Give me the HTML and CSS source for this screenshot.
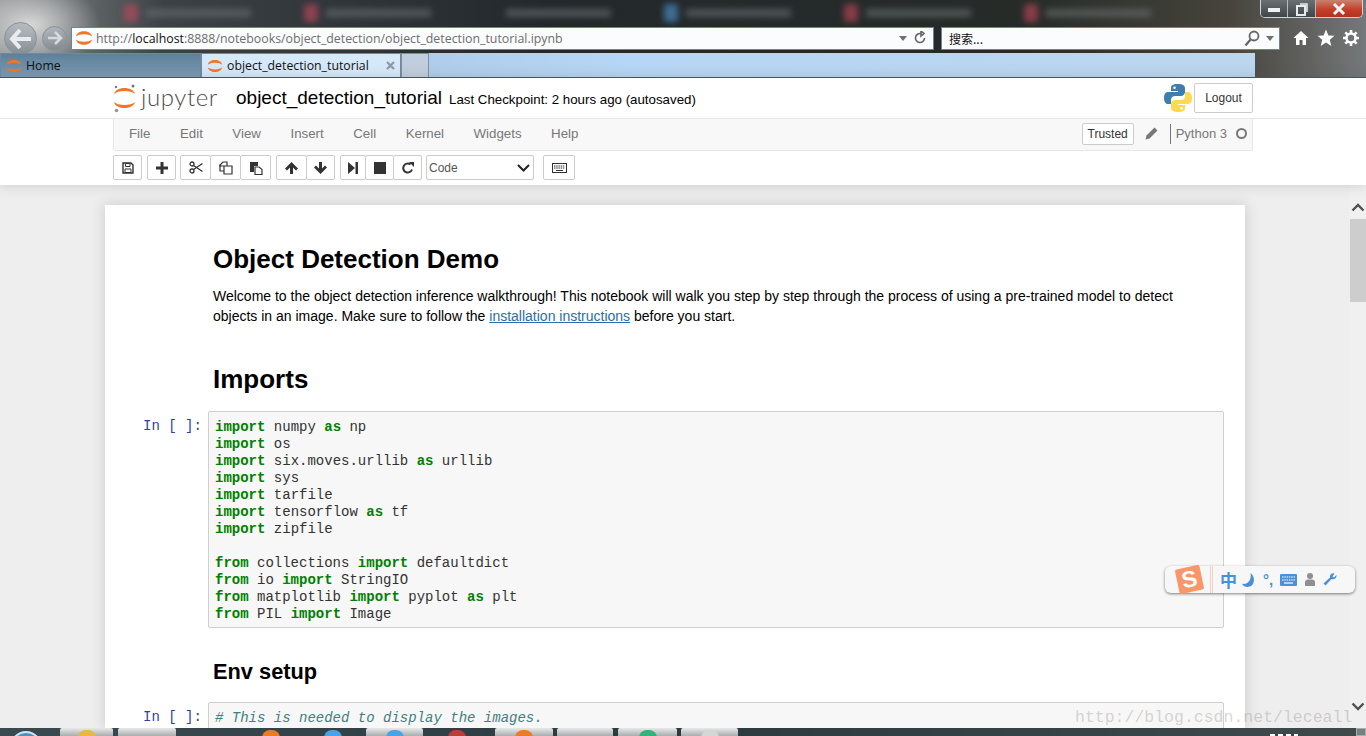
FILE: index.html
```html
<!DOCTYPE html>
<html lang="en">

<head>
    <meta charset="UTF-8">
    <meta name="viewport" content="width=device-width, initial-scale=1.0">
    <title>object_detection_tutorial</title>

    <link rel="stylesheet" href="styles.css">
</head>

<body>
    <svg class="defs" width="0" height="0">
        <symbol id="fav" viewBox="0 0 20 20">
            <path d="M2 8.500C3 1.500 17 1.500 18 8.500C15 5.500 5 5.500 2 8.500Z" fill="#f37626" />
            <path d="M2 11.500C3 18.500 17 18.500 18 11.500C15 14.500 5 14.500 2 11.500Z" fill="#f37626" />
        </symbol>
    </svg>

    <!-- browser window top -->
    <div class="chrome">
        <div class="blur-tabs">
            <div class="blur-tab"><i class="red"></i><b></b></div>
            <div class="blur-tab"><i class="red"></i><b></b></div>
            <div class="blur-tab"><i class="none"></i><b></b></div>
            <div class="blur-tab"><i class="blue"></i><b></b></div>
            <div class="blur-tab"><i class="red"></i><b></b></div>
            <div class="blur-tab"><i class="red"></i><b></b></div>
        </div>
        <div class="win-btns">
            <span class="win-btn min"><svg width="14" height="8" viewBox="0 0 14 8"><rect x="1" y="3" width="12" height="4" fill="#eef2f5" /></svg></span>
            <span class="win-btn max"><svg width="14" height="14" viewBox="0 0 14 14"><rect x="2" y="4" width="8" height="9" fill="none" stroke="#e6ebee" stroke-width="2" /><path d="M5 2H12V10" fill="none" stroke="#e6ebee" stroke-width="1.6" /></svg></span>
            <span class="win-btn close"><svg width="16" height="12" viewBox="0 0 16 12"><path d="M3 1L13 11M13 1L3 11" stroke="#f4f4f4" stroke-width="3" /></svg></span>
        </div>

        <div class="nav-row">
            <span class="nav-circle back"><svg width="24" height="22" viewBox="0 0 24 22"><path d="M11 2L3 11L11 20M3 11H22" fill="none" stroke="#e8ecef" stroke-width="4" /></svg></span>
            <span class="nav-circle fwd"><svg width="16" height="16" viewBox="0 0 16 16"><path d="M8 2L14 8L8 14M14 8H1" fill="none" stroke="#d5dade" stroke-width="2.6" /></svg></span>
            <div class="address">
                <svg class="fav" width="20" height="20"><use href="#fav" /></svg>
                <span class="url">http://<em>localhost</em>:8888/notebooks/object_detection/object_detection_tutorial.ipynb</span>
                <span class="caret"></span>
                <svg width="14" height="14" viewBox="0 0 14 14"><path d="M11.5 7A4.5 4.5 0 1 1 8 2.6M8 0V5L11 2.5Z" fill="none" stroke="#666" stroke-width="1.6" /></svg>
            </div>
            <div class="search">
                <span class="search-text">搜索...</span>
                <svg width="16" height="17" viewBox="0 0 16 17"><circle cx="10" cy="6" r="4.5" fill="none" stroke="#666" stroke-width="1.8" /><path d="M6.5 9.5L1.5 15.5" stroke="#666" stroke-width="2.2" /></svg>
                <span class="caret"></span>
            </div>
            <div class="ie-tools">
                <svg width="16" height="16" viewBox="0 0 16 16"><path d="M8 1L15.5 8H13V15H9.5V10H6.5V15H3V8H.5Z" fill="#fff" /></svg>
                <svg width="18" height="18" viewBox="0 0 18 18"><path d="M9 .5L11.4 6.4L17.5 6.8L12.8 10.8L14.3 17L9 13.6L3.7 17L5.2 10.8L.5 6.8L6.6 6.4Z" fill="#fff" /></svg>
                <svg width="16" height="16" viewBox="0 0 16 16"><circle cx="8" cy="8" r="4.5" fill="none" stroke="#fff" stroke-width="2.6" /><path d="M8 0V3M8 13V16M0 8H3M13 8H16M2.3 2.3L4.4 4.4M11.6 11.6L13.7 13.7M13.7 2.3L11.6 4.4M4.4 11.6L2.3 13.7" stroke="#fff" stroke-width="2.6" /></svg>
            </div>
        </div>

        <div class="tab-row">
            <div class="tab">
                <svg width="18" height="18"><use href="#fav" /></svg>
                <span>Home</span>
            </div>
            <div class="tab active">
                <svg width="18" height="18"><use href="#fav" /></svg>
                <span>object_detection_tutorial</span>
                <svg class="tab-x" width="9" height="9" viewBox="0 0 9 9"><path d="M1 1L8 8M8 1L1 8" stroke="#8d99a3" stroke-width="2.2" /></svg>
            </div>
            <div class="new-tab"></div>
        </div>
    </div>

    <!-- notebook header -->
    <div class="nb-head">
        <div class="header-row">
            <svg class="logo-mark" width="24" height="30" viewBox="0 0 24 30">
                <path d="M1 11C3 3 20 3 22 11C18 7 5 7 1 11Z" fill="#f37626" />
                <path d="M1 19C3 27 20 27 22 19C18 23 5 23 1 19Z" fill="#f37626" />
                <circle cx="20" cy="3" r="1.500" fill="#767677" />
                <circle cx="3" cy="4" r="1.200" fill="#767677" />
                <circle cx="3.500" cy="27.500" r="1.800" fill="#989798" />
            </svg>
            <span class="logo-text">jupyter</span>
            <span class="nb-name">object_detection_tutorial</span>
            <span class="checkpoint">Last Checkpoint: 2 hours ago (autosaved)</span>
            <svg class="py-logo" width="28" height="30" viewBox="0 0 28 28">
                <path d="M14 0C8 0 7 2 7 4V7H14V8H4C1 8 0 11 0 14C0 18 2 20 4 20H7V16C7 13 9 12 11 12H17C19 12 21 10 21 8V4C21 2 19 0 14 0Z" fill="#3f7dad" />
                <path d="M14 28C20 28 21 26 21 24V21H14V20H24C27 20 28 17 28 14C28 10 26 8 24 8H21V12C21 15 19 16 17 16H11C9 16 7 18 7 20V24C7 26 9 28 14 28Z" fill="#ffd94f" />
                <circle cx="10.500" cy="3.800" r="1.300" fill="#fff" />
                <circle cx="17.500" cy="24.200" r="1.300" fill="#fff" />
            </svg>
            <button class="logout">Logout</button>
        </div>

        <div class="menu-wrap">
            <div class="menubar">
                <span class="menu-item">File</span>
                <span class="menu-item">Edit</span>
                <span class="menu-item">View</span>
                <span class="menu-item">Insert</span>
                <span class="menu-item">Cell</span>
                <span class="menu-item">Kernel</span>
                <span class="menu-item">Widgets</span>
                <span class="menu-item">Help</span>
                <span class="trusted">Trusted</span>
                <svg class="pencil" width="13" height="13" viewBox="0 0 13 13"><path d="M9.500 .5L12.500 3.500L4.500 11.500L.5 12.500L1.500 8.500Z" fill="#777" /></svg>
                <span class="kernel-name">Python 3</span>
                <span class="kernel-dot"></span>
            </div>
        </div>

        <div class="toolbar">
            <div class="btn-group">
                <button class="tb w29"><svg width="12" height="12" viewBox="0 0 12 12"><path d="M1 1H9L11 3V11H1Z" fill="none" stroke="#333" stroke-width="1.400" /><path d="M3.500 1.500H8V4.500H3.500ZM3 7H9V10.500H3Z" fill="none" stroke="#333" /></svg></button>
            </div>
            <div class="btn-group">
                <button class="tb w29"><svg width="12" height="12" viewBox="0 0 12 12"><path d="M4.500 0H7.500V4.500H12V7.500H7.500V12H4.500V7.500H0V4.500H4.500Z" fill="#333" /></svg></button>
            </div>
            <div class="btn-group edit-group">
                <button class="tb w30"><svg width="14" height="13" viewBox="0 0 14 13"><circle cx="3" cy="3" r="2" fill="none" stroke="#333" stroke-width="1.300" /><circle cx="3" cy="10" r="2" fill="none" stroke="#333" stroke-width="1.300" /><path d="M4.500 4.500L13.500 10.500M4.500 8.500L13.500 2.500" stroke="#333" stroke-width="1.300" /></svg></button>
                <button class="tb w30"><svg width="14" height="14" viewBox="0 0 14 14"><path d="M4 1H8V5H1V4ZM5 5H13V13H5Z" fill="#fff" stroke="#333" stroke-width="1.200" /><path d="M1 4V10H5" fill="none" stroke="#333" stroke-width="1.200" /></svg></button>
                <button class="tb w30"><svg width="14" height="14" viewBox="0 0 14 14"><path d="M1 1H9V5H5V11H1Z" fill="#333" /><path d="M6 6H10L13 8.500V13.500H6Z" fill="#fff" stroke="#333" stroke-width="1.200" /></svg></button>
            </div>
            <div class="btn-group">
                <button class="tb w30"><svg width="13" height="12" viewBox="0 0 13 12"><path d="M6.500 0L13 6.500L11 8.500L8 5.500V12H5V5.500L2 8.500L0 6.500Z" fill="#333" /></svg></button>
                <button class="tb w29"><svg width="13" height="12" viewBox="0 0 13 12"><path d="M6.500 12L13 5.500L11 3.500L8 6.500V0H5V6.500L2 3.500L0 5.500Z" fill="#333" /></svg></button>
            </div>
            <div class="btn-group">
                <button class="tb w26"><svg width="10" height="12" viewBox="0 0 10 12"><path d="M0 0L7 6L0 12ZM7.500 0H10V12H7.500Z" fill="#333" /></svg></button>
                <button class="tb w28"><svg width="12" height="12" viewBox="0 0 12 12"><rect width="12" height="12" fill="#333" /></svg></button>
                <button class="tb w28"><svg width="12" height="12" viewBox="0 0 12 12"><path d="M10 7.500A4.500 4.500 0 1 1 8.500 2.500" fill="none" stroke="#333" stroke-width="2" /><path d="M7 0H12V5Z" fill="#333" /></svg></button>
            </div>
            <div class="cell-type">
                <span>Code</span>
                <svg width="13" height="8" viewBox="0 0 13 8"><path d="M1 1L6.500 6.500L12 1" fill="none" stroke="#222" stroke-width="2" /></svg>
            </div>
            <div class="btn-group">
                <button class="tb w32"><svg width="15" height="10" viewBox="0 0 15 10"><rect x=".5" y=".5" width="14" height="9" fill="none" stroke="#333" /><path d="M2 3H13M2 5H13" stroke="#333" stroke-dasharray="1.500 .7" /><path d="M4 7.500H11" stroke="#333" /></svg></button>
            </div>
        </div>
    </div>

    <!-- notebook body -->
    <div class="site">
        <div class="notebook">
            <h1 class="first">Object Detection Demo</h1>
            <p>Welcome to the object detection inference walkthrough! This notebook will walk you step by step through the process of using a pre-trained model to detect<br>objects in an image. Make sure to follow the <a href="#">installation instructions</a> before you start.</p>
            <h1 class="second">Imports</h1>
            <div class="cell">
                <div class="prompt">In [ ]:</div>
<pre class="code"><b>import</b> numpy <b>as</b> np
<b>import</b> os
<b>import</b> six.moves.urllib <b>as</b> urllib
<b>import</b> sys
<b>import</b> tarfile
<b>import</b> tensorflow <b>as</b> tf
<b>import</b> zipfile

<b>from</b> collections <b>import</b> defaultdict
<b>from</b> io <b>import</b> StringIO
<b>from</b> matplotlib <b>import</b> pyplot <b>as</b> plt
<b>from</b> PIL <b>import</b> Image</pre>
            </div>
            <h2>Env setup</h2>
            <div class="cell">
                <div class="prompt">In [ ]:</div>
<pre class="code"><i># This is needed to display the images.</i></pre>
            </div>
        </div>
        <div class="scrollbar">
            <svg width="14" height="9" viewBox="0 0 14 9"><path d="M1.500 7.500L7 2L12.500 7.500" fill="none" stroke="#505050" stroke-width="2.400" /></svg>
            <div class="thumb"></div>
            <svg class="down" width="14" height="9" viewBox="0 0 14 9"><path d="M1.500 1.500L7 7L12.500 1.500" fill="none" stroke="#505050" stroke-width="2.400" /></svg>
        </div>

        <!-- input method bar floats over the page -->
        <div class="ime">
            <span class="ime-logo">S</span>
            <span class="ime-sep"></span>
            <span class="ime-zh">中</span>
            <svg width="14" height="14" viewBox="0 0 13 13"><path d="M8 0C13 4 12 13 5 13C3 13 1 12 0 10C5 11 9 7 8 0Z" fill="#4a90d9" /></svg>
            <span class="ime-punc">°,</span>
            <svg width="17" height="12" viewBox="0 0 17 12"><rect width="17" height="12" rx="1" fill="#4a90d9" /><path d="M2 3H15M2 6H15" stroke="#fff" stroke-dasharray="1.500 .8" /><path d="M4 9H13" stroke="#fff" stroke-width="1.200" /></svg>
            <svg width="10" height="13" viewBox="0 0 10 13"><circle cx="5" cy="3" r="3" fill="#8f8f8f" /><path d="M0 13V9C0 7 2 6.500 5 6.500S10 7 10 9V13Z" fill="#8f8f8f" /></svg>
            <svg width="14" height="13" viewBox="0 0 14 13"><path d="M13.500 2L11 4.500L9.500 3.500L11.500 .5C9 -.5 6.500 1.500 7 4.500L.5 10.500L2.500 12.500L8.500 6C11.500 7 14 5 13.500 2Z" fill="#4a90d9" /></svg>
        </div>
        <div class="watermark">http://blog.csdn.net/leceall</div>
    </div>

    <!-- windows taskbar, mostly cut off -->
    <div class="taskbar">
        <span class="orb"></span>
        <span class="task-tile t53"><i class="c-yellow"></i></span>
        <span class="task-tile t58"></span>
        <span class="task-open t190"><i class="c-orange"></i><i class="c-blue"></i></span>
        <span class="task-tile t57"><i class="c-blue"></i></span>
        <span class="task-open t67"><i class="c-red"></i></span>
        <span class="task-tile t58"><i class="c-orange"></i></span>
        <span class="task-tile t56"></span>
        <span class="task-tile t59"><i class="c-green"></i></span>
        <span class="task-tile t57 last-tile"><i class="c-grey"></i></span>
        <span class="clock-top"></span>
        <span class="show-desktop"></span>
    </div>
</body>

</html>
```

FILE: styles.css
```css
* {
    margin: 0px;
    padding: 0px;
    box-sizing: border-box;
}

body {
    width: 1366px;
    height: 736px;
    overflow: hidden;
    display: flex;
    flex-direction: column;
    background-color: #eeeeee;
    font-family: "Liberation Sans", Arial, sans-serif;
    font-size: 14px;
    color: #000;
}

.defs {
    position: absolute;
}

button {
    font-family: inherit;
}

/* browser chrome */
.chrome {
    position: relative;
    height: 78px;
    flex: none;
    overflow: hidden;
    border-bottom: 1px solid #46535f;
    background:
        radial-gradient(ellipse 70px 45px at 30px 25px, #d8d8d8 0%, rgba(200, 200, 200, 0) 100%),
        linear-gradient(90deg, #8b8f90 0%, #3b4145 12%, #23282c 40%, #262b28 75%, #46443c 90%, #75787a 100%);
}

.blur-tabs {
    display: flex;
    height: 26px;
    padding-left: 124px;
    filter: blur(3px);
    opacity: .6;
}

.blur-tab {
    width: 180px;
    display: flex;
    align-items: center;
    gap: 8px;
}

.blur-tab i {
    width: 14px;
    height: 18px;
    border-radius: 3px;
}

.blur-tab .red {
    background-color: #c8485e;
}

.blur-tab .blue {
    background-color: #4f9ad8;
}

.blur-tab .none {
    background-color: transparent;
}

.blur-tab b {
    width: 105px;
    height: 8px;
    background-color: #6a6f72;
}

.win-btns {
    position: absolute;
    top: 0;
    right: 3px;
    display: flex;
    height: 18px;
    border: 1px solid #cfd6db;
    border-top: none;
    border-radius: 0 0 5px 5px;
    overflow: hidden;
}

.win-btn {
    display: flex;
    align-items: center;
    justify-content: center;
}

.win-btn.min {
    width: 27px;
    background: linear-gradient(#6b7073, #3f4548);
    border-right: 1px solid #b4bbc0;
}

.win-btn.max {
    width: 28px;
    background: linear-gradient(#6b7073, #3f4548);
    border-right: 1px solid #b4bbc0;
}

.win-btn.close {
    width: 46px;
    background: linear-gradient(#c9826e 0%, #c4402a 55%, #b3311f 100%);
}

.nav-row {
    display: flex;
    align-items: center;
    height: 27px;
    padding: 0 0 3px 4px;
}

.nav-circle {
    display: flex;
    align-items: center;
    justify-content: center;
    flex: none;
    border-radius: 50%;
    border: 1px solid #87929a;
    background: linear-gradient(rgba(170, 178, 184, .7), rgba(125, 134, 141, .7));
}

.nav-circle.back {
    width: 33px;
    height: 33px;
    margin-top: 1px;
}

.nav-circle.fwd {
    width: 25px;
    height: 25px;
    margin-left: 5px;
}

.address {
    width: 863px;
    height: 23px;
    margin-left: 4px;
    display: flex;
    align-items: center;
    padding: 0 6px 0 2px;
    background-color: #fbfcfd;
    border: 1px solid #6f8398;
    font-family: "Open Sans", sans-serif;
    font-size: 12.350px;
    color: #6d6d6d;
}

.address .fav {
    margin-right: 2px;
}

.url {
    flex: 1;
}

.url em {
    font-style: normal;
    color: #111;
}

.caret {
    width: 0;
    height: 0;
    border-left: 4px solid transparent;
    border-right: 4px solid transparent;
    border-top: 5px solid #707070;
    margin-right: 6px;
}

.search {
    width: 339px;
    height: 23px;
    margin-left: 7px;
    display: flex;
    align-items: center;
    padding: 0 5px 0 7px;
    gap: 6px;
    background-color: #fbfcfd;
    border: 1px solid #6f8398;
}

.search .caret {
    margin-right: 0;
}

.search-text {
    flex: 1;
    font-family: "Noto Sans CJK SC", sans-serif;
    font-size: 12px;
    color: #111;
}

.ie-tools {
    display: flex;
    align-items: center;
    gap: 8px;
    margin-left: 13px;
}

.tab-row {
    display: flex;
    height: 24px;
    background: linear-gradient(90deg, #9db4c8 0%, #a9c6e0 20%, #b6d6f5 50%, #bcd6ee 100%);
    margin-right: 111px;
}

.tab {
    width: 201px;
    display: flex;
    align-items: center;
    gap: 3px;
    padding-left: 4px;
    background: linear-gradient(#5d8199, #7d9ab3);
    border: 1px solid #6f8aa0;
    border-bottom: none;
    font-family: "Open Sans", sans-serif;
    font-size: 12.300px;
    color: #111;
}

.tab.active {
    width: 200px;
    background-color: #d6e9fa;
    background-image: none;
}

.tab-x {
    margin-left: auto;
    margin-right: 5px;
}

.new-tab {
    width: 28px;
    background-color: #c1cedd;
    border: 1px solid #7b8ea3;
    border-bottom: none;
}

/* notebook header */
.nb-head {
    height: 107px;
    flex: none;
    background-color: #fff;
    box-shadow: 0 0 12px rgba(87, 87, 87, .25);
    position: relative;
    z-index: 2;
}

.header-row {
    height: 41px;
    display: flex;
    align-items: center;
    padding: 0 113px;
    border-bottom: 1px solid #e7e7e7;
}

.logo-mark {
    flex: none;
}

.logo-text {
    font-family: "Lato", sans-serif;
    font-weight: 300;
    font-size: 24px;
    color: #4e4e4e;
    margin-left: 4px;
    letter-spacing: .6px;
    width: 95px;
    margin-top: -4px;
}

.nb-name {
    font-size: 19px;
}

.checkpoint {
    font-size: 13.300px;
    margin-left: 7px;
    margin-top: 3px;
}

.py-logo {
    margin-left: auto;
    margin-right: 2px;
}

.logout {
    width: 59px;
    height: 30px;
    font-size: 12px;
    color: #333;
    background-color: #fff;
    border: 1px solid #ccc;
    border-radius: 2px;
}

.menu-wrap {
    padding: 0 113px;
}

.menubar {
    height: 32px;
    display: flex;
    align-items: center;
    background-color: #f8f8f8;
    border: 1px solid #e7e7e7;
    border-top: none;
    border-radius: 0 0 2px 2px;
    padding: 0 0 2px 15px;
    font-size: 13.300px;
    color: #777;
}

.menu-item {
    margin-right: 29.500px;
}

.trusted {
    margin-left: auto;
    width: 52px;
    height: 22px;
    line-height: 20px;
    text-align: center;
    font-size: 12px;
    color: #333;
    background-color: #fff;
    border: 1px solid #ccc;
    border-radius: 2px;
}

.pencil {
    margin-left: 11px;
}

.kernel-name {
    margin-left: 12px;
    padding-left: 5px;
    border-left: 1px solid #777;
    line-height: 20px;
    font-size: 13px;
}

.kernel-dot {
    width: 11px;
    height: 11px;
    margin: 0 5px 0 9px;
    border-radius: 50%;
    border: 2px solid #777;
}

.toolbar {
    display: flex;
    align-items: center;
    gap: 5px;
    padding: 4px 113px 0;
}

.btn-group {
    display: flex;
}

.edit-group {
    margin-left: -1px;
}

.tb {
    height: 25px;
    display: flex;
    align-items: center;
    justify-content: center;
    background-color: #fff;
    border: 1px solid #ccc;
    border-radius: 2px;
    margin-right: -1px;
}

.btn-group .tb:last-child {
    margin-right: 0;
}

.w26 {
    width: 26px;
}

.w28 {
    width: 29px;
}

.w29 {
    width: 29px;
}

.w30 {
    width: 31px;
}

.w32 {
    width: 32px;
    margin-left: 4px;
}

.cell-type {
    width: 108px;
    height: 25px;
    display: flex;
    align-items: center;
    justify-content: space-between;
    padding: 0 3px 0 2px;
    background-color: #fff;
    border: 1px solid #ccc;
    border-radius: 2px;
    font-size: 12px;
    color: #555;
    margin-left: -1px;
}

/* notebook */
.site {
    position: relative;
    flex: 1;
    min-height: 0;
    display: flex;
    overflow: hidden;
    padding: 20px 0 0 105px;
}

.notebook {
    width: 1140px;
    flex: none;
    background-color: #fff;
    box-shadow: 0 0 12px 1px rgba(87, 87, 87, .2);
    padding: 1px 21px 60px 108px;
    line-height: 20px;
}

h1 {
    font-size: 26px;
    line-height: 29px;
    font-weight: bold;
}

h1.first {
    margin-top: 39px;
}

h1.second {
    margin-top: 39px;
}

p {
    margin-top: 12px;
}

a {
    color: #296eaa;
}

h2 {
    font-size: 21.800px;
    line-height: 23px;
    font-weight: bold;
    margin-top: 32px;
}

.cell {
    position: relative;
    margin-left: -5px;
    margin-top: 17px;
}

h2 + .cell {
    margin-top: 19px;
}

.prompt {
    position: absolute;
    left: -65px;
    top: 7px;
    font-family: "Liberation Mono", "Courier New", monospace;
    font-size: 14px;
    line-height: 17px;
    color: #303f9f;
}

.code {
    font-family: "Liberation Mono", "Courier New", monospace;
    font-size: 14px;
    line-height: 17px;
    color: #333;
    background-color: #f7f7f7;
    border: 1px solid #cfcfcf;
    border-radius: 2px;
    padding: 7px 6px 4px;
}

.code b {
    color: #008000;
}

.code i {
    color: #408080;
}

.scrollbar {
    position: absolute;
    top: 0;
    right: 0;
    bottom: 0;
    width: 17px;
    display: flex;
    flex-direction: column;
    align-items: center;
    padding-top: 18px;
    background-color: #f0f0f0;
}

.thumb {
    width: 16px;
    height: 83px;
    margin-top: 7px;
    margin-left: 1px;
    background-color: #cdcdcd;
}

.scrollbar .down {
    margin-top: auto;
    margin-bottom: 17px;
}

.ime {
    position: absolute;
    left: 1165px;
    top: 381px;
    width: 190px;
    height: 27px;
    display: flex;
    align-items: center;
    gap: 8px;
    padding-left: 12px;
    background-color: #f7f7f7;
    border-radius: 6px;
    box-shadow: 0 1px 3px rgba(0, 0, 0, .5);
}

.ime-logo {
    width: 25px;
    height: 25px;
    flex: none;
    text-align: center;
    font-size: 23px;
    line-height: 25px;
    font-weight: bold;
    color: #fff;
    background-color: #f9976a;
    border-radius: 2px;
    transform: rotate(-12deg);
}

.ime-sep {
    width: 3px;
    height: 27px;
    border-left: 1px solid #f3cfc8;
    border-right: 1px solid #f3cfc8;
    margin-right: -1px;
}

.ime-zh {
    font-family: "Noto Sans CJK SC", sans-serif;
    font-size: 17px;
    line-height: 20px;
    font-weight: bold;
    color: #4a90d9;
    margin-right: -3px;
}

.ime-punc {
    font-size: 15px;
    line-height: 15px;
    font-weight: bold;
    color: #4a90d9;
    margin-left: -1px;
    margin-right: -1px;
}

.watermark {
    position: absolute;
    left: 1075px;
    top: 523px;
    font-family: "Liberation Mono", monospace;
    font-size: 16.500px;
    line-height: 20px;
    color: rgba(120, 120, 110, .3);
    white-space: nowrap;
}

/* taskbar */
.taskbar {
    height: 8px;
    flex: none;
    display: flex;
    position: relative;
    z-index: 3;
    background: linear-gradient(90deg, #3a4a50, #2c3a40 50%, #3e4a4c);
    overflow: hidden;
}

.orb {
    position: absolute;
    left: 10px;
    top: 3px;
    width: 32px;
    height: 32px;
    border-radius: 50%;
    border: 2px solid #cfe3f0;
    background-color: #4d8fc0;
}

.task-tile,
.task-open {
    height: 8px;
    display: flex;
    justify-content: center;
    align-items: flex-start;
    padding-top: 2px;
}

.task-tile {
    background: linear-gradient(#e8eaea, #a9adad);
    border-radius: 2px 2px 0 0;
}

.task-tile i,
.task-open i {
    width: 18px;
    height: 8px;
    border-radius: 9px 9px 0 0;
}

.t53 {
    width: 53px;
    margin-left: 60px;
}

.t58 {
    width: 58px;
    margin-left: 5px;
}

.t190 {
    width: 190px;
    justify-content: flex-start;
    padding-left: 86px;
    gap: 44px;
}

.t57 {
    width: 57px;
}

.t67 {
    width: 67px;
}

.t56 {
    width: 56px;
    margin-left: 4px;
}

.t59 {
    width: 59px;
    margin-left: 5px;
}

.last-tile {
    margin-left: 4px;
}

.clock-top {
    width: 28px;
    height: 2px;
    margin-top: 6px;
    margin-left: auto;
    margin-right: 58px;
    background: repeating-linear-gradient(90deg, #fff 0 5px, transparent 5px 8px);
}

.show-desktop {
    width: 10px;
    background-color: #77807f;
    border: 1px solid #a8afae;
}

.c-yellow {
    background-color: #e8b93a;
}

.c-orange {
    background-color: #ee7a23;
}

.c-blue {
    background-color: #49a3e8;
}

.c-red {
    background-color: #c23b3b;
}

.c-green {
    background-color: #2fb57a;
}

.c-grey {
    background-color: #d6d6d6;
}
```
